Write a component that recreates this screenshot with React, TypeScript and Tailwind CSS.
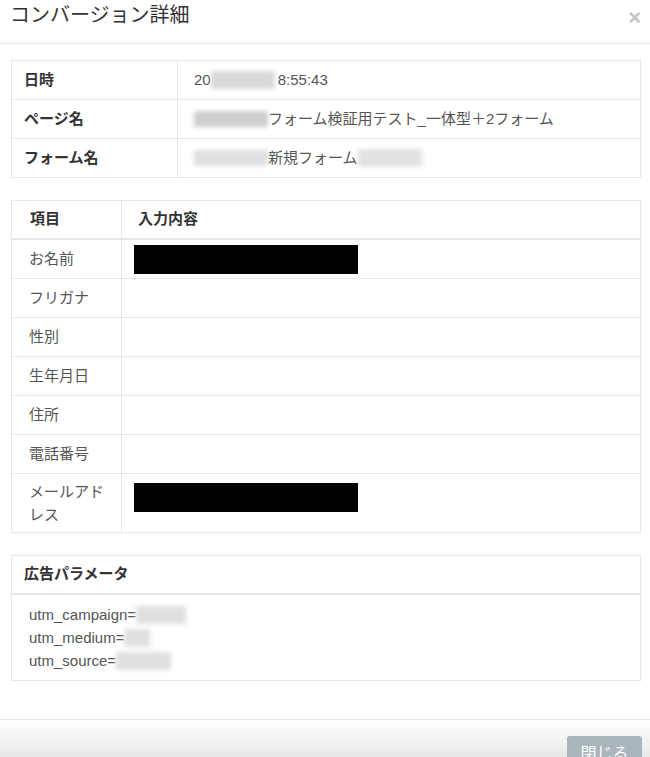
import React from 'react';

const font = "font-['Liberation_Sans','Noto_Sans_CJK_JP',sans-serif]";

function Blur({ w, h = 18, tone = 'bg-[#d9d9d9]' }: { w: number; h?: number; tone?: string }) {
  return (
    <span
      className={`inline-block align-middle ${tone} blur-[2px]`}
      style={{ width: w, height: h }}
    />
  );
}

function Redacted({ className = '' }: { className?: string }) {
  return <div className={`w-[224px] h-[29px] bg-black ${className}`} />;
}

const fields = ['お名前', 'フリガナ', '性別', '生年月日', '住所', '電話番号'];

export default function App() {
  return (
    <div className={`w-[650px] h-[757px] bg-white overflow-hidden flex flex-col text-[15px] text-[#555] ${font}`}>
      {/* Header */}
      <div className="h-[44px] shrink-0 border-b border-[#e5e5e5] flex items-start justify-between pl-[10px] pr-[9px] pt-[3px]">
        <h1 className="text-[20px] leading-[24px] text-[#333]">コンバージョン詳細</h1>
        <span className="text-[22px] leading-[24px] font-bold text-[#c4c4c4] mt-[3px]">×</span>
      </div>

      {/* Body */}
      <div className="flex-1 pl-[11px] pr-[9px] pt-[16px]">
        {/* Summary table */}
        <div className="border border-[#e3e7eb]">
          <div className="grid grid-cols-[166px_1fr] h-[39px] border-b border-[#e3e7eb]">
            <div className="flex items-center pl-3 font-bold text-[#333] border-r border-[#e3e7eb]">日時</div>
            <div className="flex items-center pl-[16px]">
              <span>20</span>
              <Blur w={64} />
              <span className="ml-[3px]">8:55:43</span>
            </div>
          </div>
          <div className="grid grid-cols-[166px_1fr] h-[39px] border-b border-[#e3e7eb]">
            <div className="flex items-center pl-3 font-bold text-[#333] border-r border-[#e3e7eb]">ページ名</div>
            <div className="flex items-center pl-[16px]">
              <Blur w={74} h={16} tone="bg-[#cfcfcf]" />
              <span>フォーム検証用テスト_一体型＋2フォーム</span>
            </div>
          </div>
          <div className="grid grid-cols-[166px_1fr] h-[38px]">
            <div className="flex items-center pl-3 font-bold text-[#333] border-r border-[#e3e7eb]">フォーム名</div>
            <div className="flex items-center pl-[16px]">
              <Blur w={74} h={16} tone="bg-[#e0e0e0]" />
              <span>新規フォーム</span>
              <Blur w={64} h={18} tone="bg-[#e2e2e2]" />
            </div>
          </div>
        </div>

        {/* Input table */}
        <div className="mt-[22px] border border-[#e3e7eb]">
          <div className="grid grid-cols-[110px_1fr] h-[39px] border-b-2 border-[#e3e7eb] font-bold text-[#333]">
            <div className="flex items-center pl-[18px] border-r border-[#e3e7eb]">項目</div>
            <div className="flex items-center pl-[16px]">入力内容</div>
          </div>
          {fields.map((f, i) => (
            <div key={f} className="grid grid-cols-[110px_1fr] h-[39px] border-b border-[#e3e7eb]">
              <div className="flex items-center pl-[17px] border-r border-[#e3e7eb]">{f}</div>
              <div className="flex items-center pl-[12px]">{i === 0 && <Redacted />}</div>
            </div>
          ))}
          <div className="grid grid-cols-[110px_1fr] h-[58px]">
            <div className="pl-[17px] pr-2 pt-[6px] leading-[23px] border-r border-[#e3e7eb]">
              メールアド
              <br />
              レス
            </div>
            <div className="pl-[12px] pt-[9px]">
              <Redacted />
            </div>
          </div>
        </div>

        {/* Ad params */}
        <div className="mt-[22px] border border-[#e3e7eb]">
          <div className="h-[39px] flex items-center pl-3 font-bold text-[#333] border-b-2 border-[#e3e7eb]">
            広告パラメータ
          </div>
          <div className="pl-[17px] pt-[8px] pb-[8px] leading-[23px]">
            <div className="flex items-center">
              utm_campaign=
              <Blur w={50} tone="bg-[#e0e0e0]" />
            </div>
            <div className="flex items-center">
              utm_medium=
              <Blur w={26} tone="bg-[#e0e0e0]" />
            </div>
            <div className="flex items-center">
              utm_source=
              <Blur w={55} tone="bg-[#e0e0e0]" />
            </div>
          </div>
        </div>
      </div>

      {/* Footer */}
      <div className="h-[38px] shrink-0 border-t border-[#e5e5e5] bg-gradient-to-b from-white to-[#e8e8e8] flex justify-end items-start pr-[8px] pt-[16px]">
        <button className="w-[75px] h-[34px] rounded-[3px] bg-[#aab5bc] text-white text-[16px] pt-[2px]">
          閉じる
        </button>
      </div>
    </div>
  );
}
